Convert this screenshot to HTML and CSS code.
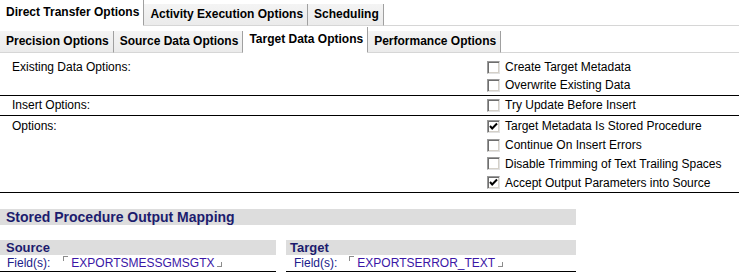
FILE: index.html
```html
<!DOCTYPE html>
<html>
<head>
<meta charset="utf-8">
<link rel="stylesheet" href="styles.css">
</head>
<body>
<div class="tabs">
  <div class="tabrow r1">
    <div class="tab sel">Direct Transfer Options</div>
    <div class="tab">Activity Execution Options</div>
    <div class="tab">Scheduling</div>
    <div class="fill"></div>
  </div>
  <div class="tabrow r2">
    <div class="tab">Precision Options</div>
    <div class="tab">Source Data Options</div>
    <div class="tab sel">Target Data Options</div>
    <div class="tab">Performance Options</div>
    <div class="fill"></div>
  </div>
</div>

<div class="section s1">
  <div class="label">Existing Data Options:</div>
  <div class="checks">
    <div class="item"><span class="box"></span>Create Target Metadata</div>
    <div class="item"><span class="box"></span>Overwrite Existing Data</div>
  </div>
</div>
<div class="section s2">
  <div class="label">Insert Options:</div>
  <div class="checks">
    <div class="item"><span class="box"></span>Try Update Before Insert</div>
  </div>
</div>
<div class="section s3">
  <div class="label">Options:</div>
  <div class="checks">
    <div class="item"><span class="box on"><svg width="11" height="11" viewBox="0 0 11 11"><polyline points="2,5 4.2,7.5 9,2.5" fill="none" stroke="#000" stroke-width="2"/></svg></span>Target Metadata Is Stored Procedure</div>
    <div class="item"><span class="box"></span>Continue On Insert Errors</div>
    <div class="item"><span class="box"></span>Disable Trimming of Text Trailing Spaces</div>
    <div class="item"><span class="box on"><svg width="11" height="11" viewBox="0 0 11 11"><polyline points="2,5 4.2,7.5 9,2.5" fill="none" stroke="#000" stroke-width="2"/></svg></span>Accept Output Parameters into Source</div>
  </div>
</div>

<div class="mapping">
  <div class="mhead">Stored Procedure Output Mapping</div>
  <div class="blocks">
    <div class="block src">
      <div class="btitle">Source</div>
      <div class="field"><span class="fl">Field(s):</span><span class="val"><i class="cl"></i>EXPORTSMESSGMSGTX<i class="cr"></i></span></div>
    </div>
    <div class="block tgt">
      <div class="btitle">Target</div>
      <div class="field"><span class="fl">Field(s):</span><span class="val"><i class="cl"></i>EXPORTSERROR_TEXT<i class="cr"></i></span></div>
    </div>
  </div>
</div>
</body>
</html>
```

FILE: styles.css
```css
html, body {
  margin: 0;
  padding: 0;
  background: #fff;
}
body {
  font-family: "Liberation Sans", Arial, sans-serif;
  font-size: 12px;
  color: #000;
  width: 739px;
}

/* tabs */
.tabrow {
  display: flex;
  align-items: flex-end;
  height: 26px;
}
.r2 {
  margin-top: 1px;
}
.tab {
  font-weight: bold;
  font-size: 12px;
  height: 21px;
  line-height: 21px;
  padding: 0 4px 0 6px;
  background: linear-gradient(#f4f4f4, #ebebeb);
  border-right: 1px solid #a0a0a0;
  border-bottom: 1px solid #d6d6d6;
  white-space: nowrap;
}
.tab.sel {
  background: #fff;
  height: 23px;
  padding-top: 2px;
  border-bottom-color: #fff;
}
.fill {
  flex: 1;
  align-self: stretch;
  border-bottom: 1px solid #d6d6d6;
}

/* option sections */
.section {
  display: grid;
  grid-template-columns: 487px 1fr;
  border-bottom: 1px solid #000;
}
.s1 { padding: 5px 0 1px; }
.s2 { padding: 0 0 1px; }
.s3 { padding: 1px 0 0; }
.label {
  padding-left: 12px;
  line-height: 18px;
}
.s3 .label { line-height: 18.75px; }
.item {
  display: flex;
  align-items: center;
  height: 18px;
  white-space: nowrap;
}
.s3 .item { height: 18.75px; }
.box {
  box-sizing: border-box;
  width: 13px;
  height: 13px;
  margin-right: 5px;
  border: 1px solid;
  border-color: #9a9a9a #e2e2e2 #e2e2e2 #9a9a9a;
  box-shadow: inset 1px 1px 0 #6e6e6e, inset -1px -1px 0 #d4d0c8;
  background: #fff;
  display: flex;
  align-items: center;
  justify-content: center;
}
.box svg { display: block; }

/* mapping */
.mapping {
  margin-top: 16px;
}
.mhead {
  width: 570px;
  height: 16px;
  line-height: 16px;
  padding-left: 6px;
  background: #dddddd;
  font-size: 14px;
  font-weight: bold;
  color: #1c1c6e;
}
.blocks {
  display: flex;
  gap: 10px;
  margin-top: 15px;
}
.block {
  border-bottom: 1px solid #000;
}
.src { width: 276px; }
.tgt { width: 290px; }
.btitle {
  height: 15px;
  line-height: 15px;
  background: #dddddd;
  font-size: 13px;
  font-weight: bold;
  color: #1c1c6e;
}
.src .btitle { padding-left: 6px; }
.tgt .btitle { padding-left: 4px; }
.field {
  height: 16px;
  line-height: 17px;
  white-space: nowrap;
}
.src .field { padding-left: 7px; }
.tgt .field { padding-left: 8px; }
.fl {
  color: #20208a;
}
.val {
  color: #3a16a6;
  margin-left: 13px;
}
.tgt .val { margin-left: 12px; }
.cl, .cr {
  display: inline-block;
  width: 4px;
  height: 4px;
  border: 0 solid #8c8c8c;
}
.cl {
  border-top-width: 1px;
  border-left-width: 1px;
  vertical-align: top;
  margin-top: 1px;
  margin-right: 3px;
}
.cr {
  border-bottom-width: 1px;
  border-right-width: 1px;
  vertical-align: baseline;
  margin-left: 3px;
}
```
